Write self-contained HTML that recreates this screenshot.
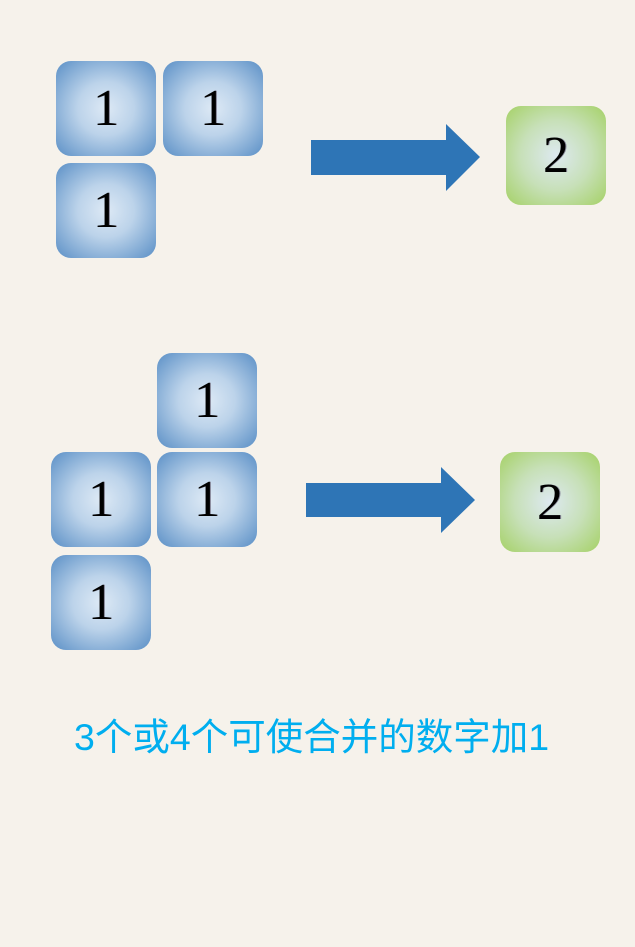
<!DOCTYPE html>
<html><head><meta charset="utf-8"><style>
html,body{margin:0;padding:0}
body{width:635px;height:947px;background:#f6f2eb;position:relative;overflow:hidden}
.t{position:absolute;width:100px;height:95px;border-radius:15px;background:radial-gradient(ellipse at center,#dde9f5 0%,#bcd3ea 40%,#5a8fc6 100%);font-family:"Liberation Serif",serif;font-size:52px;color:#000;display:flex;align-items:center;justify-content:center;text-shadow:1px 0 0 #889}
.g{background:radial-gradient(ellipse at center,#dde9f0 0%,#c7e0b8 50%,#a5d166 100%);height:99px}
.a{position:absolute}
.txt{position:absolute;left:74px;top:706px;font-family:"Liberation Sans","Noto Sans CJK SC",sans-serif;font-size:37.5px;color:#00aeef;white-space:nowrap}
</style></head><body>
<div class="t" style="left:56px;top:61px">1</div>
<div class="t" style="left:163px;top:61px">1</div>
<div class="t" style="left:56px;top:163px">1</div>
<svg class="a" style="left:0;top:0" width="635" height="947">
<polygon points="311,140 446,140 446,124 480,157 446,191 446,175 311,175" fill="#2e75b6"/>
<polygon points="306,483 441,483 441,467 475,500 441,533 441,517 306,517" fill="#2e75b6"/>
</svg>
<div class="t g" style="left:506px;top:106px">2</div>
<div class="t" style="left:157px;top:353px">1</div>
<div class="t" style="left:51px;top:452px">1</div>
<div class="t" style="left:157px;top:452px">1</div>
<div class="t" style="left:51px;top:555px">1</div>
<div class="t g" style="left:500px;top:452px;height:100px">2</div>
<div class="txt">3个或4个可使合并的数字加1</div>
</body></html>
